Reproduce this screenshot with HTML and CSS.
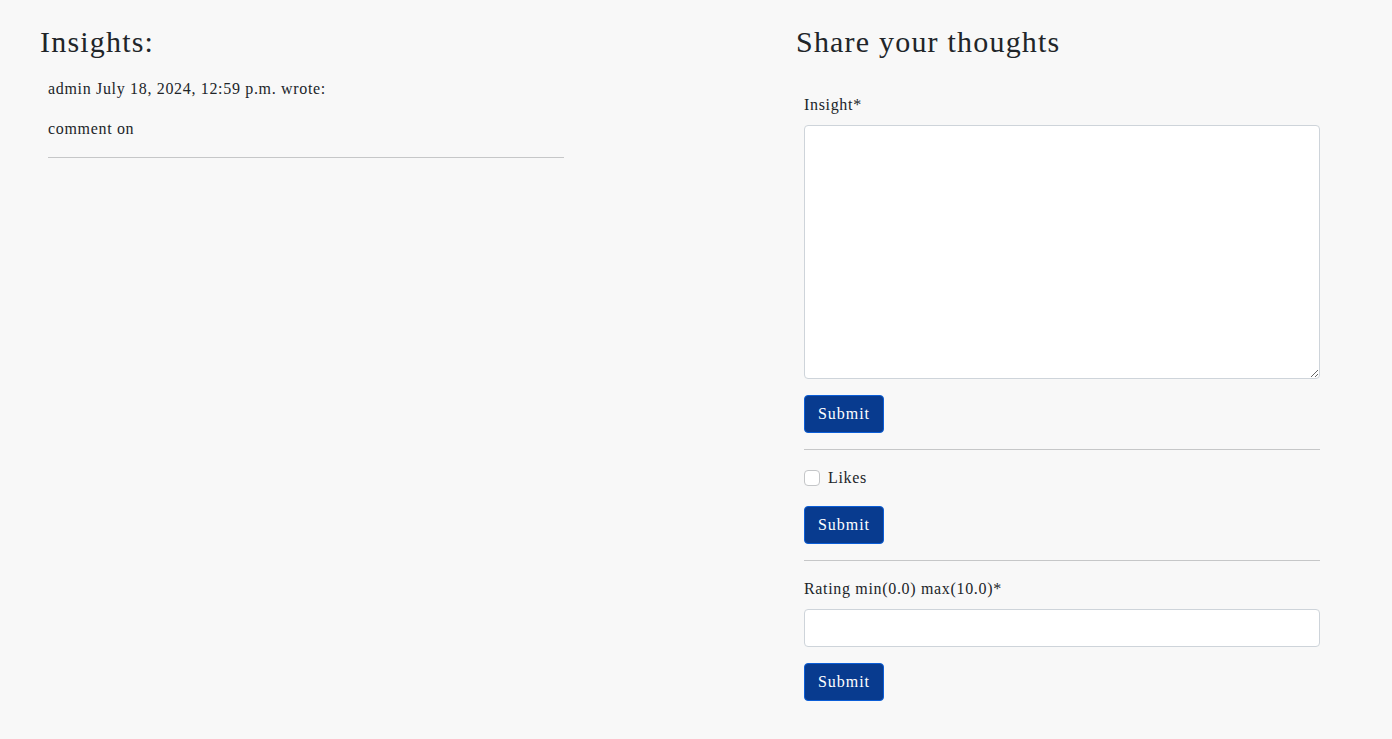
FILE: index.html
```html
<!DOCTYPE html>
<html lang="en">
<head>
<meta charset="utf-8">
<title>Insights</title>
<link rel="stylesheet" href="styles.css">
</head>
<body>
<main class="page">
  <section class="col col-left">
    <h2 class="title">Insights:</h2>
    <div class="comment">
      <p class="meta">admin July 18, 2024, 12:59 p.m. wrote:</p>
      <p class="body">comment on</p>
      <hr class="rule">
    </div>
  </section>
  <section class="col col-right">
    <h2 class="title">Share your thoughts</h2>
    <div class="forms">
      <form class="form">
        <div class="field">
          <label class="label" for="insight">Insight*</label>
          <textarea id="insight" class="control area"></textarea>
        </div>
        <button type="button" class="btn">Submit</button>
      </form>
      <hr class="rule">
      <form class="form">
        <div class="check-row">
          <input type="checkbox" id="likes" class="check">
          <label for="likes" class="check-label">Likes</label>
        </div>
        <button type="button" class="btn">Submit</button>
      </form>
      <hr class="rule">
      <form class="form">
        <div class="field">
          <label class="label" for="rating">Rating min(0.0) max(10.0)*</label>
          <input id="rating" type="text" class="control input">
        </div>
        <button type="button" class="btn">Submit</button>
      </form>
    </div>
  </section>
</main>
</body>
</html>
```
FILE: styles.css
```css
* { box-sizing: border-box; }
html, body { margin: 0; padding: 0; }
body {
  background: #f8f8f8;
  color: #212529;
  font-family: "Liberation Serif", "DejaVu Serif", serif;
  font-size: 16px;
  line-height: 24px;
  letter-spacing: 0.042em;
}
.page {
  display: flex;
  padding: 24px 0 0 40px;
  gap: 224px;
}
.col { width: 532px; flex: none; }
.title {
  margin: 0;
  font-size: 30px;
  line-height: 36px;
  font-weight: 400;
  letter-spacing: 0.04em;
}
.comment { padding: 0 8px; margin-top: 17px; }
.comment p { margin: 0 0 16px; }
.rule {
  margin: 0;
  border: 0;
  border-top: 1px solid #c6c7c8;
  height: 0;
}
.forms { padding: 0 8px; margin-top: 33px; }
.forms > .rule { margin: 0 0 16px; }
.form { display: flex; flex-direction: column; align-items: flex-start; padding-bottom: 16px; }
.field { width: 100%; margin-bottom: 16px; display: flex; flex-direction: column; }
.label { display: block; margin-bottom: 8px; }
.control {
  width: 100%;
  background: #fff;
  border: 1px solid #ced4da;
  border-radius: 4px;
  padding: 6px 12px;
  font: inherit;
  color: #212529;
}
.area { height: 254px; resize: vertical; display: block; }
.input { height: 38px; }
.btn {
  height: 38px;
  width: 80px;
  background: #083b8f;
  color: #fff;
  border: 1px solid #0b5ed7;
  border-radius: 4px;
  font: inherit;
  font-size: 16px;
  letter-spacing: 0.06em;
  padding: 0;
  cursor: pointer;
}
.check-row { display: flex; align-items: center; gap: 8px; margin-bottom: 16px; height: 24px; }
.check {
  appearance: none;
  -webkit-appearance: none;
  width: 16px;
  height: 16px;
  margin: 0;
  background: #fff;
  border: 1px solid #c4c6c8;
  border-radius: 4px;
}
.check-label { line-height: 24px; }
```
